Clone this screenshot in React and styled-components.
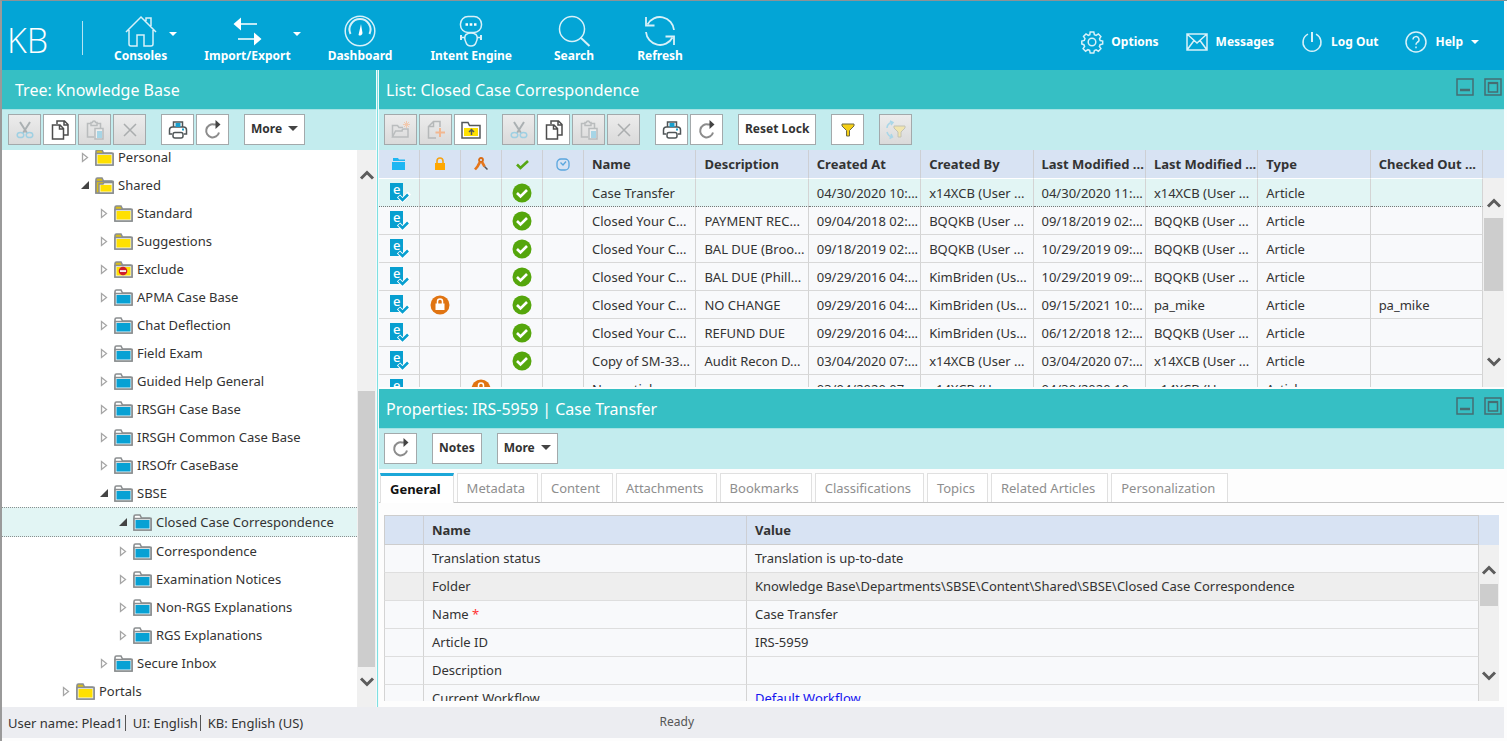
import React from "react";
import styled, { createGlobalStyle, css } from "styled-components";

const GlobalStyle = createGlobalStyle`
  * { box-sizing: border-box; }
  html, body { margin: 0; height: 100%; }
  body {
    font-family: "Noto Sans", "Open Sans", sans-serif;
    font-size: 13px;
    color: #333;
    background: #fdfdfd;
  }
  button { font: inherit; color: inherit; }
  svg { display: block; flex: none; overflow: visible; }
`;

const Page = styled.div`
  display: flex;
  flex-direction: column;
  height: 100vh;
  padding: 0 3px 3px 0;
  border-top: 1px solid #8d9296;
  border-left: 2px solid #9a9a9a;
`;

/* ---------- top bar ---------- */
const TopBar = styled.header`
  display: flex;
  align-items: center;
  flex: none;
  height: 69px;
  padding: 0 25px 0 5px;
  background: #03a5d6;
  color: #fff;
  white-space: nowrap;
`;
const Brand = styled.div`
  width: 75px;
  font-family: "Open Sans", sans-serif;
  font-weight: 300;
  font-size: 34px;
  line-height: 34px;
  padding-top: 8px;
`;
const Rule = styled.div`
  width: 1px;
  height: 34px;
  margin: 4px 31px 0 0;
  background: #b5e4f3;
`;
const Nav = styled.nav`
  display: flex;
  flex: 1;
  gap: 27px;
  padding-top: 7px;
`;
const NavButton = styled.button`
  display: flex;
  align-items: center;
  padding: 0;
  border: 0;
  background: none;
  margin-right: ${(p) => (p.$menu ? 0 : 11)}px;
`;
const NavFace = styled.span`
  display: flex;
  flex-direction: column;
  align-items: center;
  gap: 1px;
  min-width: 48px;
  font-weight: 700;
  font-size: 12px;
  line-height: 16px;
`;
const NavCaret = styled.span`
  width: 8px;
  margin: 0 0 10px 2px;
`;
const Account = styled.div`
  display: flex;
  gap: 27px;
  padding-top: 12px;
`;
const AccountButton = styled.button`
  display: flex;
  align-items: center;
  gap: 8px;
  padding: 0;
  border: 0;
  background: none;
  font-weight: 700;
  font-size: 12px;
  line-height: 22px;
`;

/* ---------- panels ---------- */
const Main = styled.main`
  display: flex;
  flex: 1;
  min-height: 0;
`;
const TreePanel = styled.section`
  display: flex;
  flex-direction: column;
  flex: none;
  width: 374px;
`;
const Divider = styled.div`
  flex: none;
  width: 3px;
  background: #7fdfe2;
  border: solid #f2fbfb;
  border-width: 0 1px;
`;
const Work = styled.div`
  display: flex;
  flex-direction: column;
  flex: 1;
  min-width: 0;
`;
const WorkPanel = styled.section`
  display: flex;
  flex-direction: column;
  flex: 1 1 0;
  min-height: 0;
`;
const PanelHead = styled.div`
  display: flex;
  justify-content: space-between;
  flex: none;
  height: 39px;
  padding: 0 2px 0 ${(p) => p.$inset}px;
  background: #36bfc4;
  color: #fff;
`;
const PanelTitle = styled.h2`
  margin: 0;
  font-weight: 400;
  font-size: 16px;
  line-height: 41px;
  white-space: nowrap;
`;
const WindowActions = styled.div`
  display: flex;
  gap: 10px;
  padding-top: 8px;
`;
const WindowButton = styled.button`
  width: 18px;
  height: 18px;
  padding: 0;
  border: 0;
  background: none;
`;

/* ---------- toolbars ---------- */
const Toolbar = styled.div`
  display: flex;
  gap: 15px;
  flex: none;
  height: 41px;
  padding: 4px ${(p) => p.$inset}px 0;
  border-top: 1px solid #a5e3e4;
  background: #c3ecee;
`;
const ToolGroup = styled.div`
  display: flex;
  gap: 2px;
`;
const toolBox = css`
  height: 31px;
  border: 1px solid #a3a9ab;
  background: #fff;
`;
const ToolButton = styled.button`
  ${toolBox}
  display: flex;
  align-items: center;
  justify-content: center;
  width: 33px;
  padding: 0;
  &:disabled { background: linear-gradient(#ececec, #dadada); }
`;
const TextButton = styled.button`
  ${toolBox}
  display: flex;
  align-items: center;
  gap: 6px;
  padding: 0 6px 2px;
  font-weight: 700;
  font-size: 12px;
  white-space: nowrap;
`;

/* ---------- scroll strip ---------- */
const Strip = styled.div`
  display: flex;
  flex-direction: column;
  flex: 1;
  min-height: 0;
  padding: 12px 1px;
  background: #f0f0f0;
`;
const StripButton = styled.button`
  display: flex;
  align-items: center;
  justify-content: center;
  flex: none;
  height: 26px;
  padding: 0;
  border: 0;
  background: none;
`;
const Track = styled.div`
  flex: ${(p) => p.$part} 1 0;
  background: ${(p) => (p.$thumb ? "#cdcdcd" : "none")};
`;
const StripColumn = styled.div`
  display: flex;
  flex-direction: column;
  flex: none;
  width: ${(p) => p.$width}px;
`;
const StripCap = styled.div`
  flex: none;
  height: ${(p) => p.$height}px;
  background: #d8e3f3;
`;

/* ---------- tree ---------- */
const Body = styled.div`
  display: flex;
  flex: 1;
  min-height: 0;
  margin-bottom: ${(p) => p.$foot || 0}px;
  overflow: hidden;
`;
const TreeList = styled.ul`
  flex: 1;
  margin: 0;
  padding: 0;
  list-style: none;
  overflow: hidden;
  background: #fff;
`;
const TreeRow = styled.li`
  display: flex;
  align-items: center;
  gap: 4px;
  height: 28px;
  padding-left: ${(p) => 58 + p.$level * 19}px;
  line-height: 14px;
  white-space: nowrap;
  &:first-child { height: 21px; padding-bottom: 7px; }
  ${(p) =>
    p.$selected &&
    css`
      height: 30px;
      border: dotted #8a8f8f;
      border-width: 1px 0;
      background: #e2f5f4;
    `}
`;
const Twisty = styled.button`
  display: flex;
  justify-content: center;
  width: 12px;
  padding: 0;
  border: 0;
  background: none;
`;

/* ---------- tables ---------- */
const Grid = styled.table`
  width: 100%;
  table-layout: fixed;
  border-spacing: 0;
`;
const GridWrap = styled.div`
  flex: 1;
  min-width: 0;
  overflow: hidden;
`;
const Head = styled.th`
  height: 29px;
  padding: 0 0 0 8px;
  border: solid #cdcfd4;
  border-width: 0 1px 0 0;
  border-bottom: 1px solid #fff;
  background: #d8e3f3;
  text-align: left;
  font-weight: 700;
  white-space: nowrap;
  overflow: hidden;
`;
const IconHead = styled(Head)`
  padding: 0;
  svg { margin: 0 auto; }
`;
const Row = styled.tr`
  background: ${(p) => (p.$selected ? "#e2f5f4" : "#f8f9fb")};
  td { border-bottom: 1px ${(p) => (p.$selected ? "dotted #777" : "solid #d8d8d8")}; }
`;
const Cell = styled.td`
  height: 28px;
  padding: 0 0 0 8px;
  border-right: 1px solid #d4d4d4;
  white-space: nowrap;
  overflow: hidden;
`;
const IconCell = styled(Cell)`
  padding: 0;
  svg { margin: 0 auto; }
`;
const PropHead = styled(Head)`
  height: 30px;
  border-top: 1px solid #cdcdcd;
  border-bottom: 1px solid #cdcdcd;
  &:first-child { border-left: 1px solid #cdcdcd; }
`;
const PropRow = styled.tr`
  background: ${(p) => (p.$shade ? "#eeeeee" : "#f8f9fb")};
  td { border-bottom: 1px solid #dedede; }
  td:first-child { border-left: 1px solid #d4d4d4; }
`;
const Star = styled.span`
  color: #f33;
`;
const WorkflowLink = styled.a`
  color: #1414f0;
`;

/* ---------- tabs ---------- */
const Tabs = styled.div`
  display: flex;
  gap: 3px;
  flex: none;
  height: 30px;
  margin: 4px 0 12px;
  padding-left: 1px;
  border-bottom: 1px solid #c6c6c6;
`;
const Tab = styled.button`
  padding: 0 12px 0 9px;
  border: 1px solid #e0e0e0;
  border-bottom: 0;
  background: #fff;
  color: #8e8e8e;
  white-space: nowrap;
  ${(p) =>
    p.$active &&
    css`
      margin-bottom: -1px;
      border-top: 3px solid #1ba7d8;
      color: #111;
      font-weight: 700;
    `}
`;
const PropBody = styled(Body)`
  padding: 0 5px;
`;

/* ---------- status bar ---------- */
const Status = styled.footer`
  display: flex;
  flex: none;
  height: 31px;
  align-items: center;
  background: #ecedf1;
`;
const StatusInfo = styled.div`
  display: flex;
  width: 40%;
  gap: 7px;
  padding-left: 6px;
`;
const StatusItem = styled.span`
  padding-right: 2px;
  line-height: 16px;
  border-right: ${(p) => (p.$last ? "0" : "1px solid #555")};
`;
const StatusState = styled.div`
  width: 148px;
  padding-bottom: 3px;
  text-align: center;
  font-size: 12px;
  color: #555;
`;

/* ---------- icons ---------- */
const Line = ({ size = 22, w, h, sw = 1.5, color = "#d8f1f9", children }) => (
  <svg width={w || size} height={h || size} viewBox={`0 0 ${w || size} ${h || size}`} fill="none" stroke={color} strokeWidth={sw} aria-hidden="true">
    {children}
  </svg>
);

const HouseIcon = () => (
  <Line size={32}>
    <path d="M1 17 16 2l15 15M4 15v14q0 2 2 2h6V20h7v11h7q2 0 2-2V15M21 6V3h5v8" />
  </Line>
);
const TransferIcon = () => (
  <Line size={32} color="#fff">
    <path d="M9 9h17M7 24h17" />
    <path d="M10 2.500v13L2.500 9zM23 17.500v13l7.500-6.500z" fill="#fff" stroke="none" />
  </Line>
);
const GaugeIcon = () => (
  <Line size={32}>
    <circle cx="16" cy="16" r="14.8" />
    <path d="M6.500 19a10.500 10.500 0 1 1 19 0" strokeWidth="2" />
    <path d="m17 9 1.500 9a2.500 2.500 0 0 1-4 2z" fill="#fff" stroke="none" />
  </Line>
);
const RobotIcon = () => (
  <Line size={32}>
    <rect x="5.500" y="1.500" width="21" height="16" rx="7.500" />
    <path d="M10.500 9.500H13M14.700 9.500h2.600M19 9.500h2.500" strokeWidth="2.500" stroke="#fff" />
    <path d="M11 19.500q5-3 10 0 2.500 3 0 8-1 3.500-5 3.500t-5-3.500q-2.500-5 0-8zM10 22.500H6M22 22.500h4" />
    <path d="M6 20v5M26 20v5" strokeWidth="2" />
  </Line>
);
const SearchIcon = () => (
  <Line size={32}>
    <circle cx="14" cy="14" r="12.500" />
    <path d="m22.500 22.500 9 8.500" strokeWidth="2" />
  </Line>
);
const RefreshIcon = () => (
  <Line size={32} sw={1.800}>
    <path d="M3.500 9.500A14.100 14.100 0 0 1 30 15M28.500 22.500A14.100 14.100 0 0 1 2 17" />
    <path d="M2 2v8.500h8.500M30 30v-8.500h-8.500" />
  </Line>
);
const GearIcon = () => (
  <Line>
    <circle cx="11" cy="11" r="3.800" />
    <path d="M9.200 1h3.600l.6 2.700 1.700.7 2.300-1.500 2.500 2.600-1.400 2.300.7 1.700 2.500.5v3l-2.600.7-.7 1.700 1.500 2.300-2.500 2.500-2.300-1.400-1.700.7-.6 2.400H9.200l-.6-2.500-1.700-.7-2.300 1.500-2.500-2.500 1.500-2.300-.7-1.700L.8 13v-3l2.500-.6.7-1.700-1.500-2.300L5 2.900l2.300 1.500 1.500-.7z" />
  </Line>
);
const MailIcon = () => (
  <Line>
    <path d="M1 3h20v16H1zM1 3l10 9 10-9M1 19l7-9.500M21 19l-7-9.500" />
  </Line>
);
const PowerIcon = () => (
  <Line>
    <path d="M7 3.200a9 9 0 1 0 8 0" />
    <path d="M11 1v10" strokeWidth="2" />
  </Line>
);
const HelpIcon = () => (
  <Line>
    <circle cx="11" cy="11" r="10" />
    <path d="M8 8.500a3 3 0 1 1 4.300 2.800q-1.300.7-1.300 2.400M11 15.500v1.800" />
  </Line>
);
const CaretIcon = ({ color = "#fff", wide }) => (
  <svg width={wide ? 10 : 8} height={wide ? 5 : 4} viewBox="0 0 8 4" aria-hidden="true"><path d="M0 0h8L4 4z" fill={color} /></svg>
);
const MinimizeIcon = () => (
  <Line size={18} color="#466d72">
    <path d="M1 1h16v16H1z" /><path d="M4 12h10" strokeWidth="2.500" />
  </Line>
);
const MaximizeIcon = () => (
  <Line size={18} color="#466d72">
    <path d="M1 1h16v16H1zM4.500 5h9v9h-9z" /><path d="M4 5h10" strokeWidth="2.200" />
  </Line>
);
const CutIcon = () => (
  <Line w={18} h={18} color="#aab0b2">
    <path d="M4 1l7 11M14 1 7 12" strokeWidth="2" />
    <g stroke="#9fd0e3"><ellipse cx="4.500" cy="14" rx="3.300" ry="2.600" /><ellipse cx="13.500" cy="14" rx="3.300" ry="2.600" /></g>
  </Line>
);
const CopyIcon = () => (
  <Line w={18} h={20} color="#4c4c4c">
    <path d="M6 4V1h7.500l3.500 3.500V15h-4M13 1v4h4" /><path d="M1.500 5H9l3.500 3.500V19h-11zM8.500 5v4h4" fill="#fff" />
  </Line>
);
const PasteIcon = () => (
  <Line w={18} h={20} color="#b9bcbd">
    <path d="M8 17H1.500V3.500H5M11 3.500h3.500V8M5 5.500h6V2.500H9.500a1.500 1.500 0 0 0-3 0H5z" />
    <path d="M9 8.500h8V19H9z" fill="#eee" /><path d="M11 11h5v7h-5z" fill="#a7d5e6" stroke="none" />
  </Line>
);
const DeleteIcon = () => (
  <Line size={16} color="#aaadae"><path d="m2 2 12 12M14 2 2 14" /></Line>
);
const PrintIcon = () => (
  <Line w={20} h={18} color="#4f5557">
    <path d="M5.500 6V1h9v5M4 13H1.500V9q0-3 3-3h11q3 0 3 3v4H16" />
    <path d="M7.500 2h5v4h-5z" fill="#189fce" stroke="none" />
    <rect x="5" y="11.500" width="10" height="5.500" rx="2" fill="#fff" />
    <path d="M14 8.500h2" stroke="#189fce" strokeWidth="2" />
  </Line>
);
const ReloadIcon = () => (
  <Line w={18} h={20} color="#8c8c8c">
    <path d="M15 12.500a6.500 6.500 0 1 1-5-8h3" strokeWidth="2" /><path d="M11.500 0l5 4.500-5 4.500z" fill="#444" stroke="none" />
  </Line>
);
const NewFolderIcon = () => (
  <Line size={20} color="#babdbe">
    <path d="M1.500 17V5.500h5l1.500 2h4M1.500 17l3-6h6.500q0-2 2-2h4V17z" />
    <path d="M15.500 1v7M12 4.500h7M13 2l5 5M18 2l-5 5" stroke="#f2c9ae" strokeWidth="1" />
  </Line>
);
const NewPageIcon = () => (
  <Line size={20} color="#b5b8b9">
    <path d="M10 18H2.500V6.500l5-5H14V7M7.500 1.500v5h-5" /><path d="M14 8v9M9.500 12.500H19" stroke="#f2b790" strokeWidth="2" />
  </Line>
);
const FolderUpIcon = () => (
  <Line w={20} h={18} color="#54585a">
    <path d="M1 17V1.500h6l1.500 3H19V17z" fill="#fff" /><path d="M3 7h14v8H3z" fill="#ffe100" stroke="none" />
    <path d="M10.500 14V9M8 11l2.500-2.500L13 11" />
  </Line>
);
const FunnelIcon = () => (
  <Line w={16} h={14} color="#6d6a45" sw={1}>
    <path d="M2 1h12v2L9.500 7.500V13h-3V7.500L2 3z" fill="#f5cf17" />
  </Line>
);
const FunnelRefreshIcon = () => (
  <Line w={22} h={18} color="#a9d6e8">
    <path d="M7 1Q2 3 2 7M5 0l3 1.500L6 4M2 11q1 4 5 5M4.500 17.500 7.500 16 6 13" />
    <path d="M9 5h11v2l-4 4v5h-3v-5L9 7z" fill="#f1e5ae" stroke="#c2c2b4" strokeWidth="1" />
  </Line>
);

const FolderIcon = ({ kind }) => {
  const yellow = kind !== "blue";
  return (
    <svg width="19" height="17" viewBox="0 0 19 17" fill="none" stroke="#8b8e90" strokeWidth="1.600" aria-hidden="true">
      <path d="M1 16V2.500Q1 1 2.500 1H7l1.500 3H16.500Q18 4 18 5.500V16z" fill={yellow ? "#d9bd18" : "#fff"} />
      <path d="M1 4.500h17V16H1z" fill={kind === "open" ? "#d9bd18" : "#f0f4f6"} />
      {kind === "open" && <path d="M4 16V7h4l1-1.500h9V16z" fill="#f7f4d8" strokeWidth="1.400" />}
      <path d={kind === "open" ? "M5.500 8h11v6.500h-11z" : "M2.500 6h14v8.500h-14z"} fill={yellow ? "#ffe000" : "#07a1d4"} stroke="none" />
      {kind === "exclude" && (
        <g stroke="none"><circle cx="9" cy="10" r="4.300" fill="#d01f2a" /><path d="M6 9.200h6v1.700H6z" fill="#fff" /></g>
      )}
    </svg>
  );
};
const ClosedTwistyIcon = () => (
  <svg width="8" height="11" viewBox="0 0 8 11" aria-hidden="true"><path d="M1.500 1.500v8l5-4z" fill="#fff" stroke="#a6a6a6" strokeWidth="1.300" /></svg>
);
const OpenTwistyIcon = () => (
  <svg width="8" height="8" viewBox="0 0 8 8" aria-hidden="true"><path d="M8 0v8H0z" fill="#444" /></svg>
);
const ChevronIcon = ({ up }) => (
  <Line w={14} h={10} color="#5c5c5c" sw={3}><path d={up ? "M1 8.500 7 2.500l6 6" : "M1 1.500l6 6 6-6"} /></Line>
);

const BlueFolderIcon = () => (
  <svg width="14" height="12" viewBox="0 0 14 12" aria-hidden="true"><path d="M1 0h5l1 1.500h6V3H1zM0 4h13v8H0z" fill="#1fb6f2" /></svg>
);
const LockIcon = () => (
  <svg width="12" height="14" viewBox="0 0 12 14" aria-hidden="true">
    <path d="M3 7V4a3 3 0 0 1 6 0v3" fill="none" stroke="#f6a313" strokeWidth="1.600" /><path d="M1 6h10v7H1z" fill="#ffa800" />
  </svg>
);
const CompassIcon = () => (
  <svg width="14" height="14" viewBox="0 0 14 14" fill="none" aria-hidden="true">
    <circle cx="7" cy="3" r="2" stroke="#d96b12" strokeWidth="1.800" /><path d="M6 5 3.500 9.500 1 12.500M8 5l2.500 4.500" stroke="#e5761c" strokeWidth="2.600" /><path d="m10.500 9.500 3 3" stroke="#555" strokeWidth="1.500" />
  </svg>
);
const TickIcon = () => (
  <svg width="13" height="11" viewBox="0 0 13 11" aria-hidden="true"><path d="m1 5.500 3.500 3.500L12 2" fill="none" stroke="#57a713" strokeWidth="2.600" /></svg>
);
const ClockIcon = () => (
  <svg width="14" height="13" viewBox="0 0 14 13" fill="none" stroke="#5aa6de" strokeWidth="1.300" aria-hidden="true"><rect x="1" y="1" width="12" height="11" rx="4" /><path d="m4.500 4.500 2.500 2.500 3-3.500" /></svg>
);
const ArticleIcon = () => (
  <svg width="19" height="19" viewBox="0 0 19 19" aria-hidden="true">
    <path d="M0 0h13v17H0z" fill="#079fd0" />
    <text x="3" y="11" fontSize="13" fontWeight="500" fill="#fff">e</text>
    <path d="m8.500 13 4 4 7-7" fill="none" stroke="#fff" strokeWidth="4.500" />
    <path d="m9 13.500 3.500 3.500L18 11.500" fill="none" stroke="#079fd0" strokeWidth="2.600" />
  </svg>
);
const ApprovedIcon = () => (
  <svg width="20" height="20" viewBox="0 0 20 20" aria-hidden="true"><circle cx="10" cy="10" r="9.500" fill="#55a60c" /><path d="m5 10 3.500 3.500L15 7" fill="none" stroke="#fff" strokeWidth="2.600" /></svg>
);
const LockedIcon = () => (
  <svg width="20" height="20" viewBox="0 0 20 20" aria-hidden="true">
    <circle cx="10" cy="10" r="9.500" fill="#e07412" /><path d="M7.500 10V6.500a2.500 2.500 0 0 1 5 0V10" fill="none" stroke="#fff" strokeWidth="1.500" /><path d="M5.500 8.500h9V15h-9z" fill="#fff" />
  </svg>
);

/* ---------- data ---------- */
const tree = [
  [1, "Personal", "yellow"],
  [1, "Shared", "open", true],
  [2, "Standard", "yellow"],
  [2, "Suggestions", "yellow"],
  [2, "Exclude", "exclude"],
  [2, "APMA Case Base", "blue"],
  [2, "Chat Deflection", "blue"],
  [2, "Field Exam", "blue"],
  [2, "Guided Help General", "blue"],
  [2, "IRSGH Case Base", "blue"],
  [2, "IRSGH Common Case Base", "blue"],
  [2, "IRSOfr CaseBase", "blue"],
  [2, "SBSE", "blue", true],
  [3, "Closed Case Correspondence", "blue", true],
  [3, "Correspondence", "blue"],
  [3, "Examination Notices", "blue"],
  [3, "Non-RGS Explanations", "blue"],
  [3, "RGS Explanations", "blue"],
  [2, "Secure Inbox", "blue"],
  [0, "Portals", "yellow"],
];
const columns = ["Name", "Description", "Created At", "Created By", "Last Modified ...", "Last Modified ...", "Type", "Checked Out ..."];
const articles = [
  ["Case Transfer", "", "04/30/2020 10:...", "x14XCB (User ...", "04/30/2020 11:...", "x14XCB (User ...", "Article", ""],
  ["Closed Your C...", "PAYMENT REC...", "09/04/2018 02:...", "BQQKB (User ...", "09/18/2019 02:...", "BQQKB (User ...", "Article", ""],
  ["Closed Your C...", "BAL DUE (Broo...", "09/18/2019 02:...", "BQQKB (User ...", "10/29/2019 09:...", "BQQKB (User ...", "Article", ""],
  ["Closed Your C...", "BAL DUE (Phill...", "09/29/2016 04:...", "KimBriden (Us...", "10/29/2019 09:...", "BQQKB (User ...", "Article", ""],
  ["Closed Your C...", "NO CHANGE", "09/29/2016 04:...", "KimBriden (Us...", "09/15/2021 10:...", "pa_mike", "Article", "pa_mike"],
  ["Closed Your C...", "REFUND DUE", "09/29/2016 04:...", "KimBriden (Us...", "06/12/2018 12:...", "BQQKB (User ...", "Article", ""],
  ["Copy of SM-33...", "Audit Recon D...", "03/04/2020 07:...", "x14XCB (User ...", "03/04/2020 07:...", "x14XCB (User ...", "Article", ""],
  ["No partial ...", "", "03/04/2020 07:...", "x14XCB (User ...", "04/30/2020 10:...", "x14XCB (User ...", "Article", ""],
];
const tabs = ["General", "Metadata", "Content", "Attachments", "Bookmarks", "Classifications", "Topics", "Related Articles", "Personalization"];
const nav = [
  ["Consoles", HouseIcon, true],
  ["Import/Export", TransferIcon, true],
  ["Dashboard", GaugeIcon],
  ["Intent Engine", RobotIcon],
  ["Search", SearchIcon],
  ["Refresh", RefreshIcon],
];
const account = [
  ["Options", GearIcon],
  ["Messages", MailIcon],
  ["Log Out", PowerIcon],
  ["Help", HelpIcon, true],
];

/* ---------- composed parts ---------- */
const Tool = ({ label, icon: Icon, off }) => (
  <ToolButton type="button" aria-label={label} disabled={off}><Icon /></ToolButton>
);
const EditTools = () => (
  <ToolGroup>
    <Tool label="Cut" icon={CutIcon} off />
    <Tool label="Copy" icon={CopyIcon} />
    <Tool label="Paste" icon={PasteIcon} off />
    <Tool label="Delete" icon={DeleteIcon} off />
  </ToolGroup>
);
const PrintTools = () => (
  <ToolGroup>
    <Tool label="Print" icon={PrintIcon} />
    <Tool label="Reload" icon={ReloadIcon} />
  </ToolGroup>
);
const MoreButton = () => (
  <TextButton type="button">More <CaretIcon color="#444" wide /></TextButton>
);
const ScrollStrip = ({ before, thumb, after }) => (
  <Strip>
    <StripButton type="button" aria-label="Scroll up"><ChevronIcon up /></StripButton>
    <Track $part={before} />
    <Track $part={thumb} $thumb />
    <Track $part={after} />
    <StripButton type="button" aria-label="Scroll down"><ChevronIcon /></StripButton>
  </Strip>
);
const WindowTitle = ({ children }) => (
  <PanelHead $inset={7}>
    <PanelTitle>{children}</PanelTitle>
    <WindowActions>
      <WindowButton type="button" aria-label="Minimize"><MinimizeIcon /></WindowButton>
      <WindowButton type="button" aria-label="Maximize"><MaximizeIcon /></WindowButton>
    </WindowActions>
  </PanelHead>
);
const PropertyRow = ({ name, shade, children }) => (
  <PropRow $shade={shade}>
    <Cell />
    <Cell>{name}</Cell>
    <Cell>{children}</Cell>
  </PropRow>
);

export default function App() {
  return (
    <>
      <GlobalStyle />
      <Page>
        <TopBar>
          <Brand>KB</Brand>
          <Rule />
          <Nav>
            {nav.map(([label, Icon, menu]) => (
              <NavButton type="button" key={label} $menu={menu}>
                <NavFace><Icon />{label}</NavFace>
                {menu && <NavCaret><CaretIcon /></NavCaret>}
              </NavButton>
            ))}
          </Nav>
          <Account>
            {account.map(([label, Icon, menu]) => (
              <AccountButton type="button" key={label}>
                <Icon />{label}{menu && <CaretIcon />}
              </AccountButton>
            ))}
          </Account>
        </TopBar>

        <Main>
          <TreePanel>
            <PanelHead $inset={13}><PanelTitle>Tree: Knowledge Base</PanelTitle></PanelHead>
            <Toolbar $inset={6}>
              <EditTools />
              <PrintTools />
              <MoreButton />
            </Toolbar>
            <Body>
              <TreeList>
                {tree.map(([level, label, kind, open]) => (
                  <TreeRow key={label} $level={level} $selected={level === 3 && open}>
                    <Twisty type="button" aria-label={(open ? "Collapse " : "Expand ") + label}>
                      {open ? <OpenTwistyIcon /> : <ClosedTwistyIcon />}
                    </Twisty>
                    <FolderIcon kind={kind} />
                    {label}
                  </TreeRow>
                ))}
              </TreeList>
              <StripColumn $width={19}><ScrollStrip before={203} thumb={276} after={2} /></StripColumn>
            </Body>
          </TreePanel>

          <Divider />

          <Work>
            <WorkPanel>
              <WindowTitle>List: Closed Case Correspondence</WindowTitle>
              <Toolbar $inset={5}>
                <ToolGroup>
                  <Tool label="New folder" icon={NewFolderIcon} off />
                  <Tool label="New article" icon={NewPageIcon} off />
                  <Tool label="Parent folder" icon={FolderUpIcon} />
                </ToolGroup>
                <EditTools />
                <PrintTools />
                <TextButton type="button">Reset Lock</TextButton>
                <Tool label="Filter" icon={FunnelIcon} />
                <Tool label="Refresh filter" icon={FunnelRefreshIcon} off />
              </Toolbar>
              <Body $foot={2}>
                <GridWrap>
                  <Grid>
                    <colgroup>
                      <col width="41" /><col width="41" /><col width="41" /><col width="41" /><col width="41" />
                      {columns.map((c, i) => <col key={i} />)}
                    </colgroup>
                    <thead>
                      <tr>
                        <IconHead aria-label="Kind"><BlueFolderIcon /></IconHead>
                        <IconHead aria-label="Locked"><LockIcon /></IconHead>
                        <IconHead aria-label="Draft"><CompassIcon /></IconHead>
                        <IconHead aria-label="Approved"><TickIcon /></IconHead>
                        <IconHead aria-label="Scheduled"><ClockIcon /></IconHead>
                        {columns.map((c, i) => <Head key={i}>{c}</Head>)}
                      </tr>
                    </thead>
                    <tbody>
                      {articles.map((cells, r) => (
                        <Row key={r} $selected={r === 0}>
                          <IconCell><ArticleIcon /></IconCell>
                          <IconCell>{r === 4 && <LockedIcon />}</IconCell>
                          <IconCell>{r === 7 && <LockedIcon />}</IconCell>
                          <IconCell>{r < 7 && <ApprovedIcon />}</IconCell>
                          <IconCell />
                          {cells.map((text, i) => <Cell key={i}>{text}</Cell>)}
                        </Row>
                      ))}
                    </tbody>
                  </Grid>
                </GridWrap>
                <StripColumn $width={21}>
                  <StripCap $height={28} />
                  <ScrollStrip before={2} thumb={73} after={58} />
                </StripColumn>
              </Body>
            </WorkPanel>

            <WorkPanel>
              <WindowTitle>Properties: IRS-5959 | Case Transfer</WindowTitle>
              <Toolbar $inset={5}>
                <Tool label="Reload properties" icon={ReloadIcon} />
                <TextButton type="button">Notes</TextButton>
                <MoreButton />
              </Toolbar>
              <Tabs role="tablist">
                {tabs.map((t, i) => (
                  <Tab type="button" role="tab" key={t} $active={i === 0} aria-selected={i === 0}>{t}</Tab>
                ))}
              </Tabs>
              <PropBody $foot={6}>
                <GridWrap>
                  <Grid>
                    <colgroup><col width="40" /><col width="323" /><col /></colgroup>
                    <thead>
                      <tr><PropHead /><PropHead>Name</PropHead><PropHead>Value</PropHead></tr>
                    </thead>
                    <tbody>
                      <PropertyRow name="Translation status">Translation is up-to-date</PropertyRow>
                      <PropertyRow name="Folder" shade>Knowledge Base\Departments\SBSE\Content\Shared\SBSE\Closed Case Correspondence</PropertyRow>
                      <PropertyRow name={<>Name <Star>*</Star></>}>Case Transfer</PropertyRow>
                      <PropertyRow name="Article ID">IRS-5959</PropertyRow>
                      <PropertyRow name="Description" />
                      <PropertyRow name="Current Workflow"><WorkflowLink href="#workflow">Default Workflow</WorkflowLink></PropertyRow>
                    </tbody>
                  </Grid>
                </GridWrap>
                <StripColumn $width={20}>
                  <StripCap $height={30} />
                  <ScrollStrip before={2} thumb={22} after={57} />
                </StripColumn>
              </PropBody>
            </WorkPanel>
          </Work>
        </Main>

        <Status>
          <StatusInfo>
            <StatusItem>User name: Plead1</StatusItem>
            <StatusItem>UI: English</StatusItem>
            <StatusItem $last>KB: English (US)</StatusItem>
          </StatusInfo>
          <StatusState>Ready</StatusState>
        </Status>
      </Page>
    </>
  );
}
